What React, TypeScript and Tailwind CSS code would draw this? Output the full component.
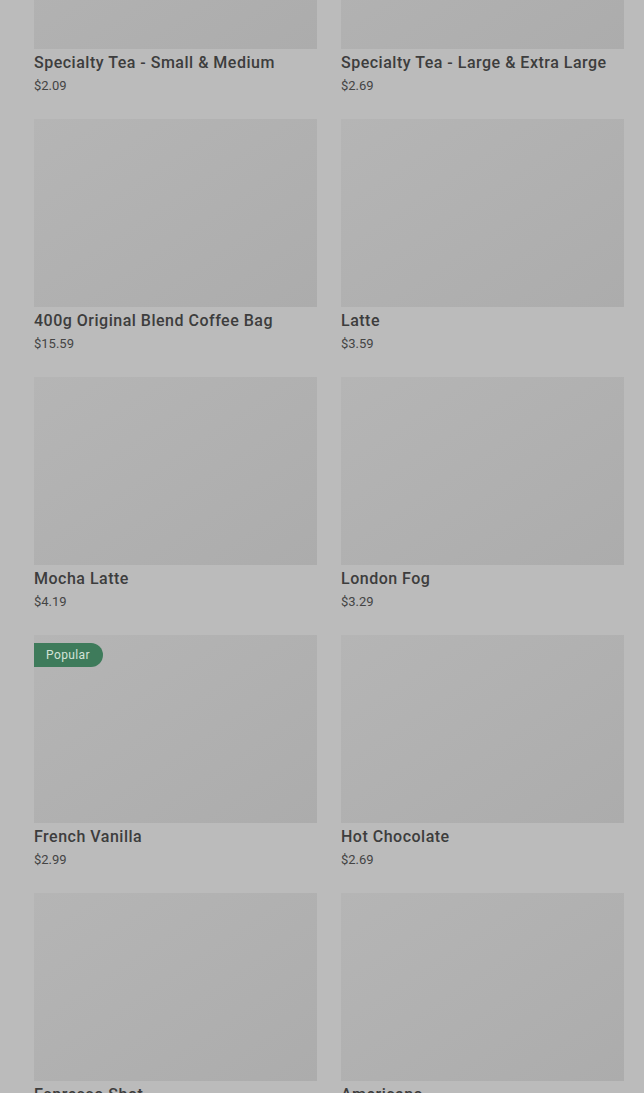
type Item = {
  name: string;
  price: string;
  badge?: string;
};

const items: Item[] = [
  { name: 'Specialty Tea - Small & Medium', price: '$2.09' },
  { name: 'Specialty Tea - Large & Extra Large', price: '$2.69' },
  { name: '400g Original Blend Coffee Bag', price: '$15.59' },
  { name: 'Latte', price: '$3.59' },
  { name: 'Mocha Latte', price: '$4.19' },
  { name: 'London Fog', price: '$3.29' },
  { name: 'French Vanilla', price: '$2.99', badge: 'Popular' },
  { name: 'Hot Chocolate', price: '$2.69' },
  { name: 'Espresso Shot', price: '$1.99' },
  { name: 'Americano', price: '$2.79' },
];

function MenuCard({ item }: { item: Item }) {
  return (
    <div className="flex flex-col">
      <div className="relative h-[188px] bg-gradient-to-br from-[#b5b5b5] to-[#acacac]">
        {item.badge && (
          <span className="absolute left-0 top-[8px] flex h-[24px] items-center rounded-r-full bg-[#3e7b5b] pl-[12px] pr-[13px] text-[12px] tracking-[0.4px] text-[#d3e3d8]">
            {item.badge}
          </span>
        )}
      </div>
      <p className="mt-[2px] h-[24px] text-[16px] leading-[24px] font-medium tracking-[0.5px] text-[#3d3d3d]">
        {item.name}
      </p>
      <p className="h-[22px] text-[13px] leading-[22px] text-[#444444]">{item.price}</p>
    </div>
  );
}

export default function App() {
  return (
    <div className="h-[1093px] overflow-hidden bg-[#bbbbbb] font-['Roboto','Liberation_Sans',sans-serif]">
      <div className="-mt-[139px] grid grid-cols-2 gap-x-[24px] gap-y-[22px] px-[34px] pr-[20px]">
        {items.map((item) => (
          <MenuCard key={item.name} item={item} />
        ))}
      </div>
    </div>
  );
}
